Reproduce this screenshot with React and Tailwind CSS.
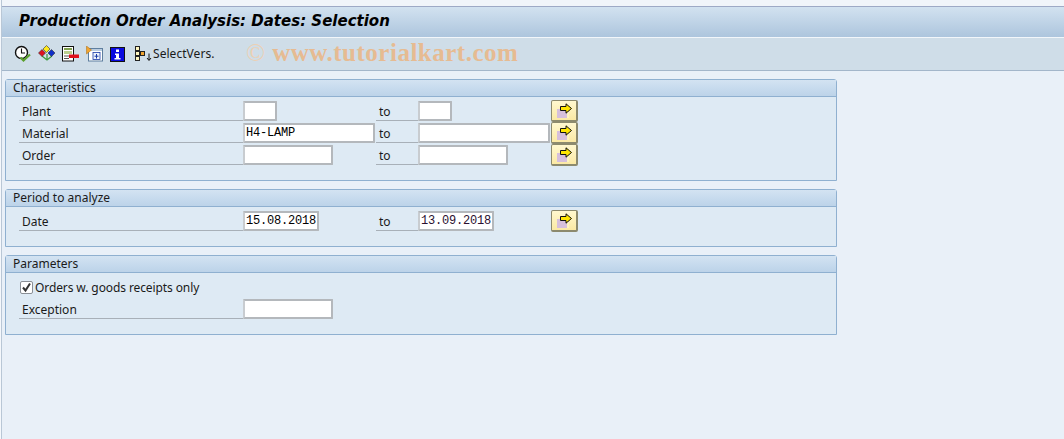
import React from 'react';

const ClockIcon = () => (
  <svg width="18" height="18" viewBox="0 0 18 18">
    <circle cx="7.5" cy="7.5" r="6" fill="#fff" stroke="#111" strokeWidth="1.4" />
    <path d="M7.5 3.5V8H11" fill="none" stroke="#111" strokeWidth="1.1" />
    <path d="M6.5 12.5L9.5 15.5L16 9.5" fill="none" stroke="#5aa02c" strokeWidth="2.2" />
  </svg>
);

const VariantIcon = () => (
  <svg width="18" height="18" viewBox="0 0 18 18">
    <path d="M9 9V14M4 11L9 15L14 11" fill="none" stroke="#3c9a3c" strokeWidth="1.2" />
    <path d="M8.5 0.5L12 4L8.5 7.5L5 4Z" fill="#ffe81a" stroke="#333" strokeWidth="0.6" />
    <path d="M4 4.5L7.5 8L4 11.5L0.5 8Z" fill="#e01020" stroke="#333" strokeWidth="0.6" />
    <path d="M13.5 4.5L17 8L13.5 11.5L10 8Z" fill="#1030c8" stroke="#333" strokeWidth="0.6" />
  </svg>
);

const DocIcon = () => (
  <svg width="17" height="16" viewBox="0 0 17 16">
    <rect x="0.5" y="0.5" width="11" height="14.5" fill="#fff" stroke="#111" />
    <rect x="2" y="2" width="8" height="2" fill="#7f9f4f" />
    <rect x="2" y="5" width="8" height="3" fill="#b9cf8f" />
    <path d="M2 10H7M2 12.5H7" stroke="#555" />
    <rect x="7" y="8.5" width="10" height="3.5" fill="#e0101c" />
  </svg>
);

const InsertIcon = () => (
  <svg width="17" height="16" viewBox="0 0 17 16">
    <rect x="2.5" y="2.5" width="14" height="12.5" fill="#fff" stroke="#5f7f9f" />
    <rect x="3" y="3" width="13" height="2" fill="#b9cce0" />
    <rect x="7" y="6.5" width="7" height="7" fill="#eef4fb" stroke="#1a3aa8" strokeWidth="0.8" />
    <path d="M10.5 8V12.5M8.5 10.2H12.5" stroke="#1a3aa8" />
    <path d="M0.5 0V8L5.5 4Z" fill="#f2a530" stroke="#a86a10" strokeWidth="0.5" />
  </svg>
);

const InfoIcon = () => (
  <svg width="15" height="15" viewBox="0 0 15 15">
    <rect x="0.5" y="0.5" width="14" height="14" fill="#0a0ae0" stroke="#111" />
    <path d="M6 2.5H9V5H6ZM5 6.5H9V11H10.5V12.5H4.5V11H6V8H5Z" fill="#fff" />
  </svg>
);

const SelectVersIcon = () => (
  <svg width="18" height="16" viewBox="0 0 18 16">
    <g fill="#fff6c0" stroke="#222">
      <rect x="0.5" y="0.5" width="4" height="4" />
      <rect x="0.5" y="5.5" width="4" height="4" />
      <rect x="0.5" y="10.5" width="4" height="4" />
    </g>
    <rect x="5.5" y="5.5" width="4" height="4" fill="#f2a530" stroke="#222" />
    <path d="M14 7.5V14M12 12L14 14.5L16 12" fill="none" stroke="#111" />
  </svg>
);

const ArrowIcon = () => (
  <svg width="17" height="15" viewBox="0 0 17 15">
    <rect x="1" y="6" width="12" height="9" fill="#d6bfdc" />
    <rect x="11" y="9" width="2" height="6" fill="#fdf3c0" />
    <path d="M4.5 3.5H10V0.8L15.5 5.5L10 10.2V7.5H4.5Z" fill="#ffe600" stroke="#111" strokeWidth="1" />
  </svg>
);

const MoreButton = () => (
  <div className="w-[27px] h-[22px] -mt-px flex items-center justify-center rounded-[2px] border border-[#8c8a6e] border-b-2 border-r-2 bg-gradient-to-b from-[#fff8cf] to-[#fbe9a4]">
    <ArrowIcon />
  </div>
);

const Input = ({ w, value, date }) => (
  <div
    className={`${w} h-[20px] shrink-0 flex items-center pl-[1px] rounded-[1px] bg-white border-2 border-[#b4b8bc] border-l-[#c8ccd0] font-['Liberation_Mono',monospace] text-[12px] tracking-[-0.2px] ${date ? 'text-[#2a1030]' : 'text-black'}`}
  >
    {value}
  </div>
);

const Label = ({ children, w = 'w-[224px]', className = '' }) => (
  <div className={`${w} h-[20px] shrink-0 flex items-center border-b border-[#a8b0b8] leading-none pl-[3px] pt-[2px] ${className}`}>
    {children}
  </div>
);

const RangeRow = ({ label, lowW, highW, low, high }) => (
  <div className="flex items-start h-[22px] pl-[13px]">
    <Label>{label}</Label>
    <div className="w-[133px] shrink-0">
      <Input w={lowW} value={low} />
    </div>
    <Label w="w-[42px]">to</Label>
    <div className="w-[133px] shrink-0">
      <Input w={highW} value={high} date={!!high} />
    </div>
    <MoreButton />
  </div>
);

const Panel = ({ title, h, children }) => (
  <div className={`${h} w-[832px] border border-[#8fb0d0] rounded-t-[3px] bg-[#deeaf4]`}>
    <div className="h-[17px] flex items-center pl-[7px] border-b border-[#8fb0d0] bg-gradient-to-b from-[#d3e3f2] to-[#bcd3e9] text-[#1a1a1a]">
      {title}
    </div>
    <div className="pt-[4px]">{children}</div>
  </div>
);

export default function App() {
  return (
    <div className="relative w-[1064px] h-[439px] overflow-hidden bg-[#f5f8fc] pl-[1px] font-['Noto_Sans',sans-serif] text-[12px] text-[#1a1a1a]">
      <div className="h-full border-l border-[#b9c7d6] bg-[#e9f0f8]">
        <div className="h-[6px] bg-[#f1f5fa]" />
        <div className="h-[31px] flex items-center pl-[17px] pb-[2px] border-t border-[#9eaac6] bg-gradient-to-b from-[#d2e2f0] to-[#adc5dd] font-['DejaVu_Sans',sans-serif] font-bold italic text-[15px] text-black">
          Production Order Analysis: Dates: Selection
        </div>
        <div className="relative h-[34px] flex items-center pl-[12px] border-t border-[#f2f6fa] border-b border-b-[#a3b6ca] bg-[#cfdde8]">
          <div className="w-[24px]"><ClockIcon /></div>
          <div className="w-[24px]"><VariantIcon /></div>
          <div className="w-[24px]"><DocIcon /></div>
          <div className="w-[24px]"><InsertIcon /></div>
          <div className="w-[25px]"><InfoIcon /></div>
          <SelectVersIcon />
          <span className="text-[12px] tracking-[0.05px]">SelectVers.</span>
          <span className="absolute left-[244px] -top-[4px] font-['Liberation_Serif',serif] font-bold text-[25px] tracking-[0.5px] text-[#e6bb92]">
            <span className="font-normal text-[#ecd0b4]">©</span> www.tutorialkart.com
          </span>
        </div>

        <div className="pl-[3px] pt-[8px] flex flex-col gap-[8px]">
          <Panel title="Characteristics" h="h-[102px]">
            <RangeRow label="Plant" lowW="w-[34px]" highW="w-[34px]" />
            <RangeRow label="Material" lowW="w-[132px]" highW="w-[132px]" low="H4-LAMP" />
            <RangeRow label="Order" lowW="w-[90px]" highW="w-[90px]" />
          </Panel>
          <Panel title="Period to analyze" h="h-[58px]">
            <RangeRow label="Date" lowW="w-[76px]" highW="w-[76px]" low="15.08.2018" high="13.09.2018" />
          </Panel>
          <Panel title="Parameters" h="h-[80px]">
            <div className="h-[22px] flex items-start pl-[14px]">
              <div className="h-[20px] pt-[1px] flex items-center gap-[2px]">
                <div className="w-[13px] h-[13px] flex items-center justify-center rounded-[2px] bg-white border border-[#8a8f96]">
                  <svg width="11" height="11" viewBox="0 0 11 11">
                    <path d="M2 5.5L4.5 8.5L9 1.5" fill="none" stroke="#333" strokeWidth="2" />
                  </svg>
                </div>
                <span className="tracking-[-0.1px]">Orders w. goods receipts only</span>
              </div>
            </div>
            <div className="flex items-start h-[22px] pl-[13px]">
              <Label>Exception</Label>
              <Input w="w-[90px]" />
            </div>
          </Panel>
        </div>
      </div>
    </div>
  );
}
